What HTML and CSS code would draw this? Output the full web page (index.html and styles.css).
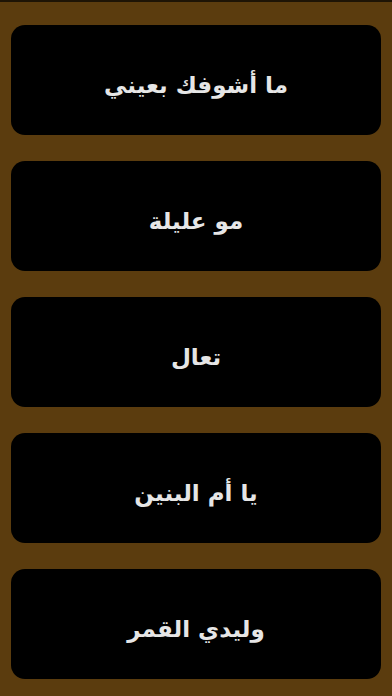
FILE: index.html
```html
<!DOCTYPE html>
<html lang="ar" dir="rtl">
<head>
<meta charset="utf-8">
<link rel="stylesheet" href="styles.css">
</head>
<body>
<div class="topline"></div>
<main class="list">
  <div class="card">ما أشوفك بعيني</div>
  <div class="card">مو عليلة</div>
  <div class="card">تعال</div>
  <div class="card">يا أم البنين</div>
  <div class="card">وليدي القمر</div>
</main>
</body>
</html>
```
FILE: styles.css
```css
html, body {
  margin: 0;
  padding: 0;
  height: 100%;
}
body {
  background: #5b3c0e;
  font-family: "DejaVu Sans", "Noto Sans", sans-serif;
  overflow: hidden;
}
.topline {
  height: 2px;
  background: #1e1405;
}
.list {
  display: flex;
  flex-direction: column;
  gap: 26px;
  padding: 23px 11px 0 11px;
}
.card {
  height: 110px;
  background: #000;
  border-radius: 14px;
  display: flex;
  align-items: center;
  justify-content: center;
  color: #e6e6e6;
  font-weight: bold;
  font-size: 23px;
  padding-top: 10px;
  box-sizing: border-box;
}
```
